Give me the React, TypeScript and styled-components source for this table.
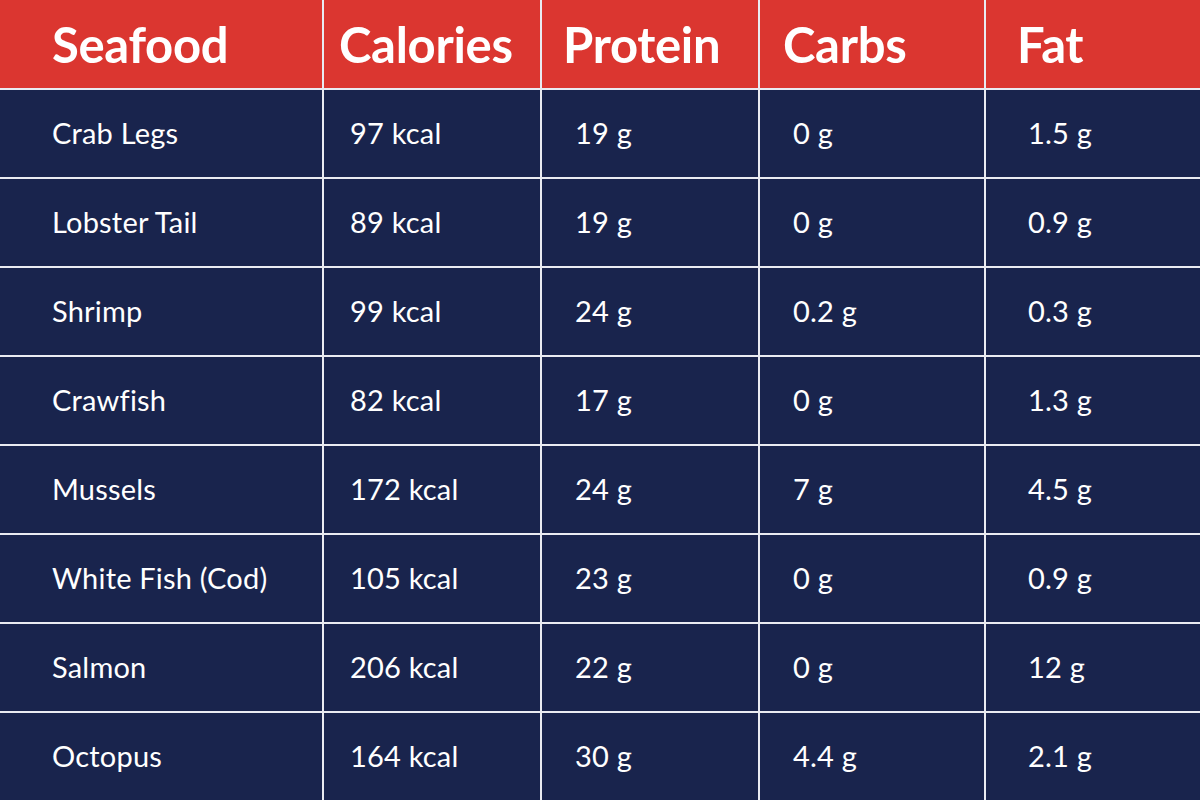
import React from "react";
import styled, { createGlobalStyle } from "styled-components";

const Global = createGlobalStyle`
  html, body { margin: 0; padding: 0; background: #19244d; }
  body { font-family: Lato, "Open Sans", sans-serif; }
`;

const Table = styled.div`
  display: grid;
  grid-template-columns: 322px 216px 216px 224px 214px;
  grid-template-rows: 88px repeat(8, 87px);
  gap: 2px;
  width: 1200px;
  height: 800px;
  background: #e9ebf2;
  overflow: hidden;
`;

const HeadCell = styled.div<{ $pad: number }>`
  background: #db3630;
  color: #ffffff;
  display: flex;
  align-items: center;
  padding-left: ${(p) => p.$pad}px;
  font-size: 49px;
  font-weight: 700;
  letter-spacing: -0.3px;
`;

const Cell = styled.div<{ $pad: number }>`
  background: #19244d;
  color: #ffffff;
  display: flex;
  align-items: center;
  padding-left: ${(p) => p.$pad}px;
  padding-bottom: 3px;
  font-size: 29px;
  font-weight: 400;
  letter-spacing: 0.2px;
`;

const headers = ["Seafood", "Calories", "Protein", "Carbs", "Fat"];
const headPad = [52, 15, 21, 23, 31];
const bodyPad = [52, 26, 33, 33, 42];

const rows = [
  ["Crab Legs", "97 kcal", "19 g", "0 g", "1.5 g"],
  ["Lobster Tail", "89 kcal", "19 g", "0 g", "0.9 g"],
  ["Shrimp", "99 kcal", "24 g", "0.2 g", "0.3 g"],
  ["Crawfish", "82 kcal", "17 g", "0 g", "1.3 g"],
  ["Mussels", "172 kcal", "24 g", "7 g", "4.5 g"],
  ["White Fish (Cod)", "105 kcal", "23 g", "0 g", "0.9 g"],
  ["Salmon", "206 kcal", "22 g", "0 g", "12 g"],
  ["Octopus", "164 kcal", "30 g", "4.4 g", "2.1 g"],
];

export default function App() {
  return (
    <>
      <Global />
      <Table>
        {headers.map((h, i) => (
          <HeadCell key={h} $pad={headPad[i]}>
            {h}
          </HeadCell>
        ))}
        {rows.map((r, ri) =>
          r.map((c, ci) => (
            <Cell key={`${ri}-${ci}`} $pad={bodyPad[ci]}>
              {c}
            </Cell>
          ))
        )}
      </Table>
    </>
  );
}
